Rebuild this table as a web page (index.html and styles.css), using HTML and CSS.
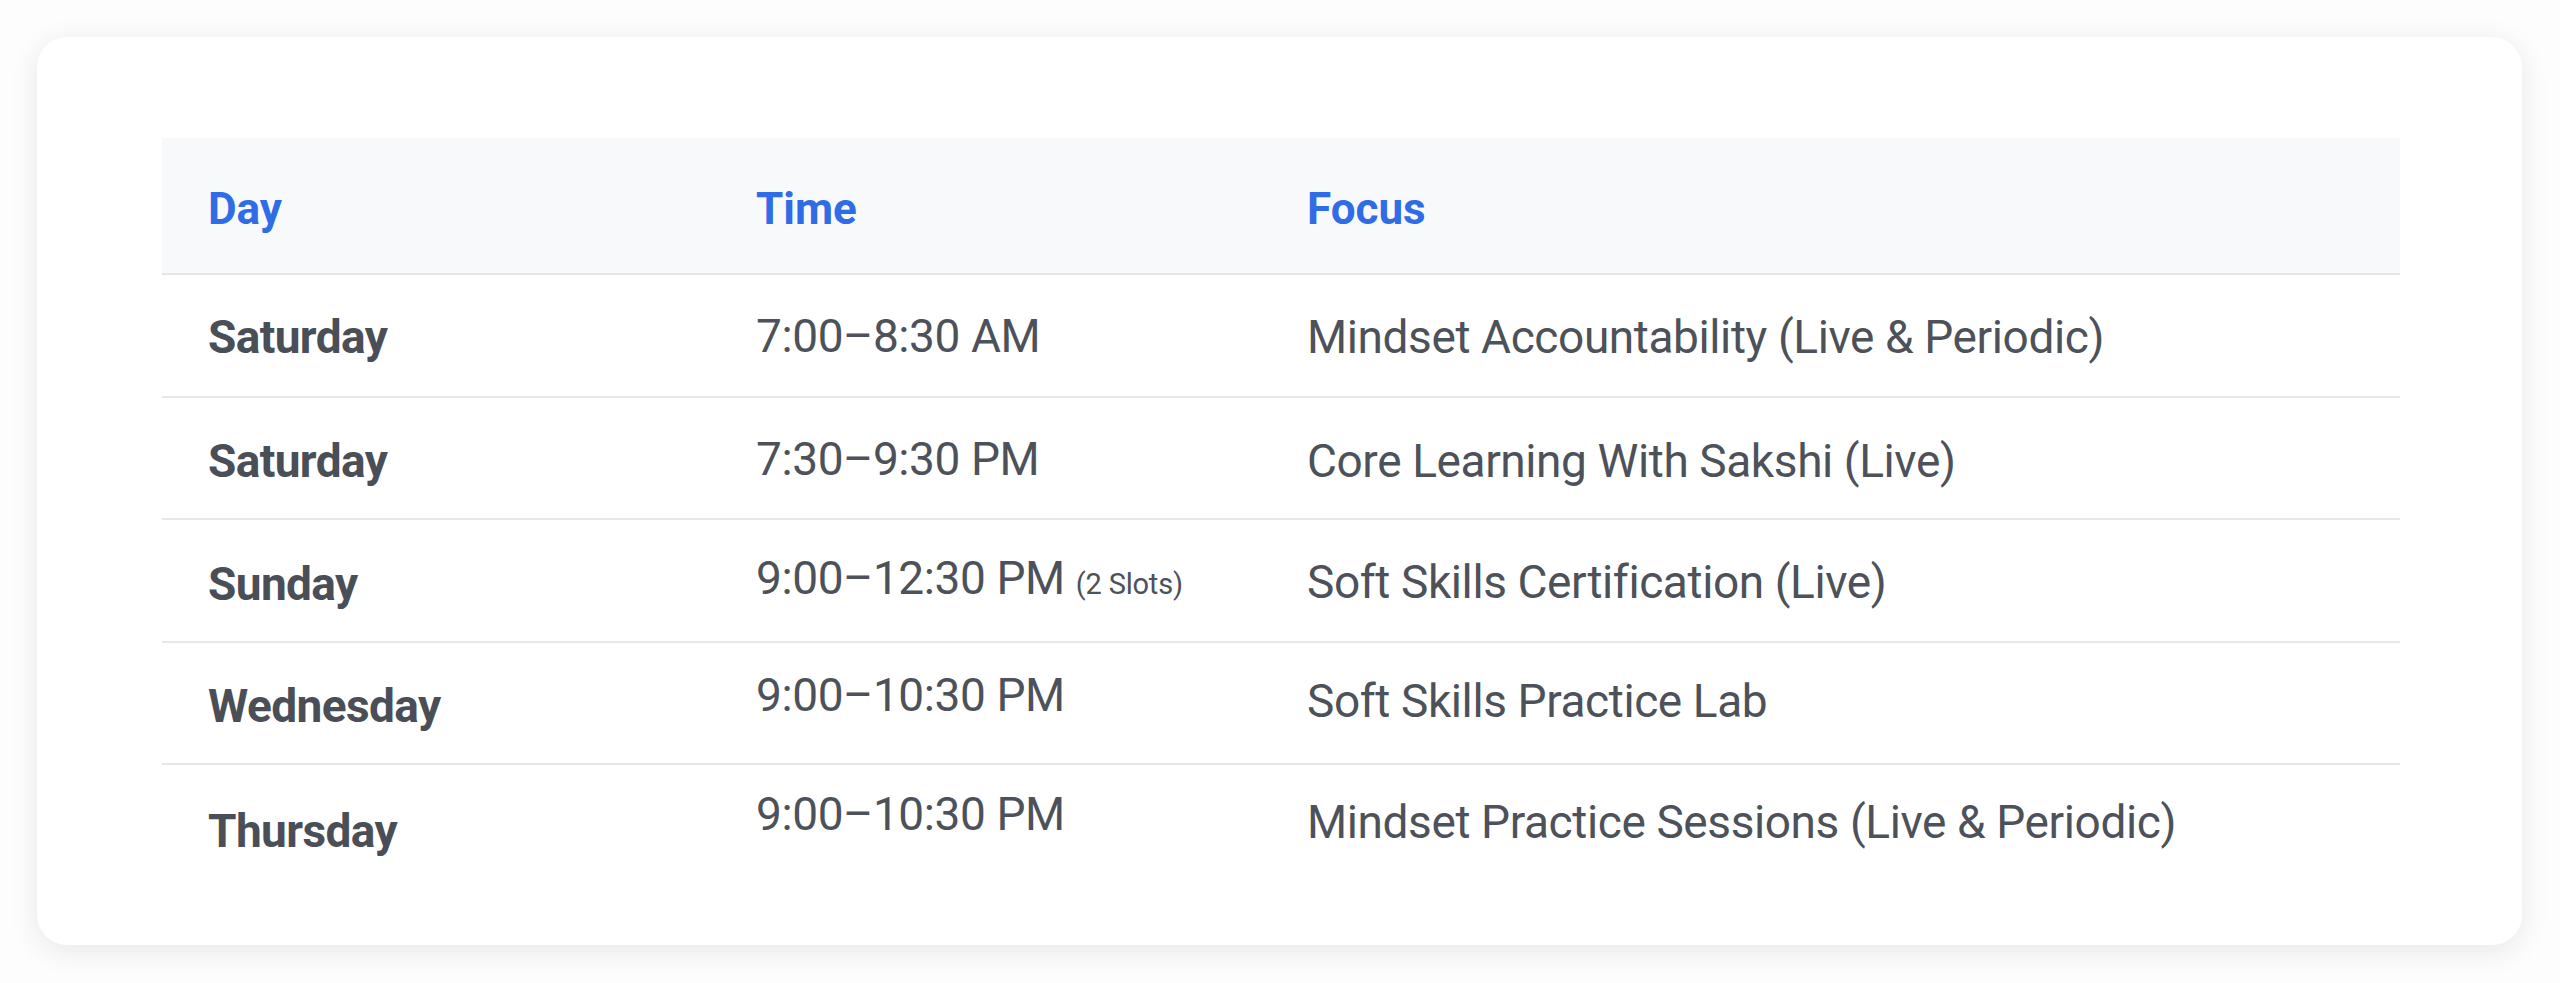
FILE: index.html
```html
<!DOCTYPE html>
<html lang="en">
<head>
  <meta charset="UTF-8" />
  <title>Weekly Schedule</title>
  <link rel="stylesheet" href="styles.css">
</head>
<body>
  <div class="schedule-card">
    <table class="schedule">
      <colgroup>
        <col class="col-day" />
        <col class="col-time" />
        <col />
      </colgroup>
      <thead>
        <tr>
          <th>Day</th>
          <th>Time</th>
          <th>Focus</th>
        </tr>
      </thead>
      <tbody>
        <tr class="row-1">
          <td class="day">Saturday</td>
          <td class="time">7:00–8:30 AM</td>
          <td class="focus">Mindset Accountability (Live &amp; Periodic)</td>
        </tr>
        <tr class="row-2">
          <td class="day">Saturday</td>
          <td class="time">7:30–9:30 PM</td>
          <td class="focus">Core Learning With Sakshi (Live)</td>
        </tr>
        <tr class="row-3">
          <td class="day">Sunday</td>
          <td class="time">9:00–12:30 PM <span class="note">(2 Slots)</span></td>
          <td class="focus">Soft Skills Certification (Live)</td>
        </tr>
        <tr class="row-4">
          <td class="day">Wednesday</td>
          <td class="time">9:00–10:30 PM</td>
          <td class="focus">Soft Skills Practice Lab</td>
        </tr>
        <tr class="row-5">
          <td class="day">Thursday</td>
          <td class="time">9:00–10:30 PM</td>
          <td class="focus">Mindset Practice Sessions (Live &amp; Periodic)</td>
        </tr>
      </tbody>
    </table>
  </div>
</body>
</html>
```

FILE: styles.css
```css
* {
  box-sizing: border-box;
}
body {
  margin: 0;
  padding: 37px 38px 39px 37px;
  background-color: #fdfdfd;
  font-family: Roboto, "Noto Sans", Arial, sans-serif;
}

.schedule-card {
  background-color: #ffffff;
  border-radius: 30px;
  box-shadow: 0 6px 30px rgba(0, 0, 0, 0.09);
  padding: 101px 122px 57px 125px;
}

.schedule {
  width: 100%;
  table-layout: fixed;
  border-collapse: separate;
  border-spacing: 0;
}
.col-day { width: 548px; }
.col-time { width: 551px; }

.schedule th {
  height: 137px;
  padding: 6px 46px 0;
  background-color: #f8f9fb;
  border-bottom: 2px solid #e4e6e9;
  color: #2f6ce5;
  font-size: 44px;
  font-weight: 700;
  text-align: left;
  vertical-align: middle;
}

.schedule td {
  height: 122.5px;
  padding: 8px 46px 0;
  border-bottom: 2px solid #e6e7ea;
  color: #4d515a;
  font-size: 46px;
  line-height: 1.2;
  letter-spacing: -0.4px;
  vertical-align: middle;
  white-space: nowrap;
}
.schedule tbody tr:last-child td {
  border-bottom: none;
}

.schedule td.day {
  font-weight: 700;
  color: #4a4e57;
  letter-spacing: -0.6px;
}

.note {
  font-size: 29px;
  letter-spacing: -0.2px;
}

/* the later rows sit a little higher in the time / focus columns */
.row-1 td { padding-top: 5px; }
.row-1 .time { padding-top: 2px; }
.row-2 .time { padding-bottom: 4px; }
.row-3 .time { padding-bottom: 12px; }
.row-3 .focus { padding-bottom: 4px; }
.row-4 .time { padding-bottom: 22px; }
.row-4 .focus { padding-bottom: 10px; }
.row-5 .time { padding-bottom: 32px; }
.row-5 .focus { padding-bottom: 16px; }
.row-5 .day { padding-top: 10px; }
```
